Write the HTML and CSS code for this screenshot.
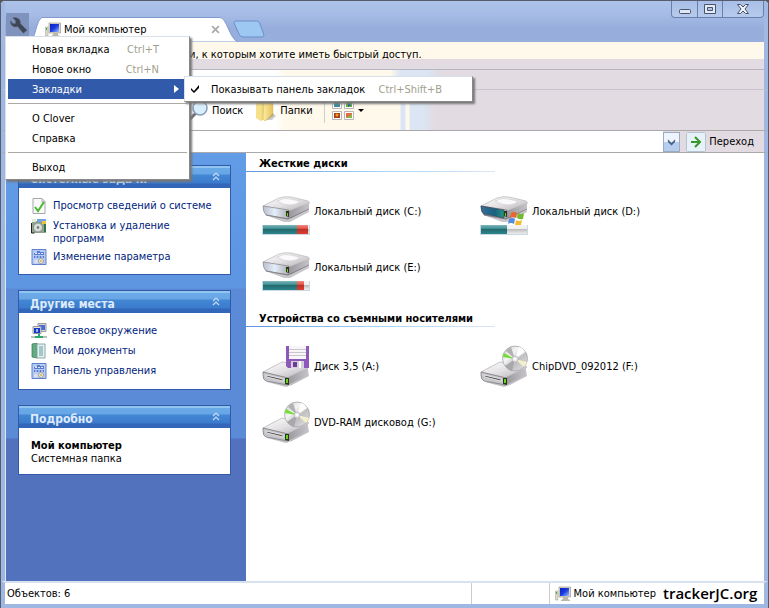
FILE: index.html
```html
<!DOCTYPE html>
<html lang="ru">
<head>
<meta charset="utf-8">
<title>Мой компьютер</title>
<link rel="stylesheet" href="styles.css">
</head>
<body>
<svg class="defs" aria-hidden="true">
  <defs>
    <linearGradient id="metal" x1="0" y1="0" x2="1" y2="1"><stop offset="0" stop-color="#fff"/><stop offset=".5" stop-color="#e3e1e3"/><stop offset="1" stop-color="#b0aeb2"/></linearGradient>
    <linearGradient id="side" x1="0" y1="0" x2="1" y2="0"><stop offset="0" stop-color="#98969a"/><stop offset="1" stop-color="#c5c3c7"/></linearGradient>
    <linearGradient id="face" x1="0" y1="0" x2="1" y2="0"><stop offset="0" stop-color="#b9bfcc"/><stop offset=".45" stop-color="#e4eefa"/><stop offset="1" stop-color="#aaa8ad"/></linearGradient>
    <linearGradient id="teal" x1="0" y1="0" x2="1" y2="0"><stop offset="0" stop-color="#3a6f9c"/><stop offset=".6" stop-color="#17607f"/><stop offset="1" stop-color="#2b9484"/></linearGradient>
    <linearGradient id="screen" x1="0" y1="0" x2="1" y2="1"><stop offset="0" stop-color="#0a1fc0"/><stop offset=".5" stop-color="#1c3be0"/><stop offset="1" stop-color="#9cc4ff"/></linearGradient>
    <linearGradient id="disc" x1="0" y1="0" x2="1" y2="1"><stop offset="0" stop-color="#c9c9cb"/><stop offset=".35" stop-color="#f4f4f4"/><stop offset=".6" stop-color="#c0bfc2"/><stop offset="1" stop-color="#e6e6e6"/></linearGradient>
    <linearGradient id="folder" x1="0" y1="0" x2="1" y2="0"><stop offset="0" stop-color="#fbeca6"/><stop offset="1" stop-color="#e6c258"/></linearGradient>
  </defs>
  <symbol id="hdd" viewBox="0 0 48 27">
    <path d="M6 20 22 26 28 26 47 16 46 11 28 22Z" fill="#c9c7cb"/>
    <path d="M1 10 17 2Q23 0 29 1L46 5Q48 6 47 8L27 15Z" fill="url(#metal)" stroke="#b6b4b8" stroke-width=".7"/>
    <path d="M27 15 47 7V13L30 22 26 23Z" fill="url(#side)"/>
    <path d="M1 10 27 14Q28 19 26 23L4 19Q1 16 1 10Z" fill="url(#face)" stroke="#88868b" stroke-width=".7"/>
    <path d="M15 5Q22 1 29 3T38 5Q35 9 28 9T15 5Z" fill="#fafafa" stroke="#d0ced2" stroke-width=".7"/>
    <path d="M4 19 26 23 47 13" stroke="#7a787d" stroke-width=".8" fill="none"/>
    <path d="M24 15h3v6l-3-1Z" fill="#28351b"/><path d="M25 17h1v3h-1Z" fill="#72cb24"/>
  </symbol>
  <symbol id="sysdisk" viewBox="0 0 48 30">
    <use href="#hdd" width="48" height="27"/>
    <path d="M1 10 24 14V22L4 18Q1 16 1 10Z" fill="url(#teal)" stroke="#394552" stroke-width=".7"/>
    <path d="m31 17q3-2 6 0l-1 5q-3-2-6 0Z" fill="#ed6331"/><path d="m38 17q3 2 6 0l-1 6q-3 1-6-1Z" fill="#76b82d"/>
    <path d="m29 23q3-2 6 0l-1 5q-3-2-6 0Z" fill="#528ce0"/><path d="m36 24q3 2 6 0l-1 5q-3 2-6 0Z" fill="#f4bc2c"/>
  </symbol>
  <symbol id="drivebase" viewBox="0 0 48 44">
    <path d="M5 38 24 43 30 41 47 32 46 26 26 38Z" fill="#c3c1c5"/>
    <path d="M1 28 20 18 46 22Q47 23 46 24L25 34Z" fill="url(#metal)" stroke="#b0aeb2" stroke-width=".7"/>
    <path d="M25 34 46 24V31L26 41Z" fill="url(#side)"/>
    <path d="M1 28 26 34V41L4 37Q1 36 1 31Z" fill="#c8c6ca" stroke="#7e7c81" stroke-width=".8"/>
    <path d="m4 31 17 4v2L5 33Z" fill="#4a494d" stroke="#f4f4f4" stroke-width=".8"/>
    <path d="M23 34h4v7l-4-1Z" fill="#27371c"/><path d="M24 35h2v4h-2Z" fill="#65d21f"/>
  </symbol>
  <symbol id="floppy" viewBox="0 0 48 44">
    <use href="#drivebase" width="48" height="44"/>
    <path d="M24 2h23v22H26l-2-2Z" fill="#8e58ba"/><path d="M27 2h17v13H27Z" fill="#f7f5f8"/>
    <path d="M27 5.500h17M27 8.500h17M27 11.500h17" stroke="#cbc7cf"/><path d="M29 17h13v7H29Z" fill="#d5cedb"/><path d="M31 18h4v5h-4Z" fill="#6d3c96"/><path d="M37 17h2v7h-2Z" fill="#fff"/>
  </symbol>
  <symbol id="optical" viewBox="0 0 48 44">
    <use href="#drivebase" width="48" height="44"/>
    <circle cx="35" cy="14.500" r="12.500" fill="url(#disc)" stroke="#a6a4a8" stroke-width=".8"/>
    <path d="M35 15 24 9q-1 2-1 4Z" fill="#75dd35"/><path d="M35 15 31 3q-3 1-5 4Z" fill="#b2b1b4"/><path d="m35 15 4-12q4 1 6 5Z" fill="#fff"/><path d="m35 15 12 3q-1 3-3 5Z" fill="#f4f0cc"/><path d="m35 15-3 12q-4-1-7-5Z" fill="#a9a7ab"/>
    <circle cx="35" cy="15" r="3" fill="#e9e8ea" stroke="#b8b8b8" stroke-width=".8"/><circle cx="35" cy="15" r="1.200" fill="#fff"/>
  </symbol>
  <symbol id="pc" viewBox="0 0 16 16">
    <path d="M.5 5h2.500v9H.5Z" fill="#dedccf" stroke="#aaa79b" stroke-width=".6"/><path d="M1 6h1v2H1Z" fill="#28b82c"/>
    <path d="M4 1h11.500v10H4Z" fill="#ddd8c8" stroke="#9f9b91" stroke-width=".7"/><path d="M5 2h9v8H5Z" fill="url(#screen)"/>
    <path d="M8 11h5v2l2 1v1H6v-1l2-1Z" fill="#bbb7aa"/>
  </symbol>
  <symbol id="check" viewBox="0 0 16 16"><path d="M2 .5h9l3 3v12H2Z" fill="#fafafa" stroke="#a7a7a7"/><path d="M11 1v3h3" fill="none" stroke="#aaa"/><path d="m4 9 3 4 6-9" fill="none" stroke="#48b82e" stroke-width="2"/></symbol>
  <symbol id="install" viewBox="0 0 16 16"><path d="M1 3h14v12H1Z" fill="#8fa590"/><path d="M1 1h4v3H1Z" fill="#e4ead9"/><path d="M6 1h9v3H6Z" fill="#71a3df"/><path d="M11 3h4v3h-4Z" fill="#e9c53d"/><path d="M.5 5v10h3" stroke="#222" fill="none"/><circle cx="7" cy="9.500" r="4.500" fill="#d9ddd9" stroke="#8a8d8a"/><circle cx="7" cy="9.500" r="1.200" fill="#67716b"/><path d="M13 6h2v8h-2Z" fill="#35714a"/></symbol>
  <symbol id="panel" viewBox="0 0 16 16"><path d="M1 .5h14v15H1Z" fill="#b4cbf4" stroke="#6180cc"/><path d="M3 4h3V2h3v1h4v3H3ZM3 7h10v2H3Z" fill="#5b7bd0"/><path d="M4 4.500h2m1 0h2m1 0h2M4 8h2m1 0h2m1 0h2" stroke="#dbe6ff"/><circle cx="5" cy="12.500" r="2" fill="#dce0eb"/><circle cx="10" cy="12" r="2.500" fill="#eee" stroke="#a4a29a"/><circle cx="10" cy="12" r="1" fill="#d8b33b"/></symbol>
  <symbol id="network" viewBox="0 0 16 16"><path d="M7 .5h8v8H7Z" fill="#dbd9c9" stroke="#9998a0"/><path d="M8 2h6v5H8Z" fill="#456bdc"/><path d="M2 3.500h8v7H2Z" fill="#e7e4d9" stroke="#9998a0"/><path d="M3 5h6v5H3Z" fill="#1838c5"/><path d="M5 6h2v3H5Z" fill="#98b7ff"/><path d="M8 11v3M4 14h8" stroke="#2caa68" stroke-width="2"/><path d="M0 13h4v2H0Zm12 0h4v2h-4Z" fill="#bac1bd"/></symbol>
  <symbol id="docs" viewBox="0 0 16 16"><path d="M1 1 6 0v15l-5-1Z" fill="#63ab80" stroke="#36755b" stroke-width=".7"/><path d="M6 1h8v14H6Z" fill="#e3eff0" stroke="#8caaa8"/><path d="M8 4h4M8 6h4M8 8h4M8 10h4M8 12h4" stroke="#609fa0"/></symbol>
  <symbol id="chev" viewBox="0 0 10 10"><path d="m2 4 3-3 3 3M2 8l3-3 3 3" stroke="#c4dcf8" fill="none" stroke-width="1.200"/></symbol>
</svg>

<div class="window">
  <header class="titlebar">
    <div class="app">
      <button class="wrench" aria-label="Меню"><svg viewBox="0 0 24 24"><path d="M11 4a5 5 0 0 0-4 0l3 3v3H7L5 7a5 5 0 0 0 7 6l6 7 4-3-7-7a5 5 0 0 0-4-6Z" fill="#3f4756" stroke="#5d6a80" stroke-width=".6"/></svg></button>
      <nav class="menu">
        <button class="row"><span>Новая вкладка</span><kbd>Ctrl+T</kbd></button>
        <button class="row"><span>Новое окно</span><kbd>Ctrl+N</kbd></button>
        <div class="sub">
          <button class="row active"><span>Закладки</span><svg class="arrow" viewBox="0 0 5 8"><path d="M0 0 5 4 0 8Z" fill="#fff"/></svg></button>
          <div class="submenu"><button class="row"><svg class="tick" viewBox="0 0 10 10"><path d="m1 4 3 3 5-6v3L4 9 1 6Z"/></svg><span>Показывать панель закладок</span><kbd>Ctrl+Shift+B</kbd></button></div>
        </div>
        <hr>
        <button class="row">О Clover</button>
        <button class="row">Справка</button>
        <hr>
        <button class="row">Выход</button>
      </nav>
    </div>
    <div class="tab">
      <svg class="tabshape" viewBox="0 0 208 25" preserveAspectRatio="none"><path d="M0 25C6 21 6 3 12 .5H190C197 1 199 21 208 25Z" fill="#fff" stroke="#7f9bcf"/></svg>
      <svg class="i16"><use href="#pc"/></svg><span>Мой компьютер</span>
      <button class="close" aria-label="Закрыть вкладку"><svg viewBox="0 0 8 8"><path d="m1 1 6 6m0-6L1 7" stroke="#aaa" stroke-width="1.500"/></svg></button>
    </div>
    <button class="newtab" aria-label="Новая вкладка"><svg viewBox="0 0 32 18"><path d="M3 1H24Q26 1 27 4L31 15Q31 17 29 17H10Q7 17 6 14L1 3Q1 1 3 1Z" fill="#9cc8f1" stroke="#6d8fc8"/></svg></button>
    <div class="controls">
      <button aria-label="Свернуть"><svg viewBox="0 0 14 12"><rect x="1.500" y="6.500" width="11" height="4" rx="1" fill="#dfe7f5" stroke="#46536b"/></svg></button>
      <button aria-label="Развернуть"><svg viewBox="0 0 14 12"><path d="M1.500 1.500h11v9h-11Zm3 3v3h5v-3Z" fill="#e4eaf5" fill-rule="evenodd" stroke="#46536b"/></svg></button>
      <button class="wide" aria-label="Закрыть"><svg viewBox="0 0 14 12"><path d="M1.500 1.500h3L7 4l2.500-2.500h3L9 6l3.500 4.500h-3L7 8l-2.500 2.500h-3L5 6Z" fill="#edf1f8" stroke="#46536b"/></svg></button>
    </div>
  </header>
  <div class="info"><span>ки, к которым хотите иметь быстрый доступ.</span></div>
  <div class="menubar"></div>
  <div class="toolbar">
    <button><svg class="i24" viewBox="0 0 24 24"><path d="m11 15-8 8" stroke="#74717a" stroke-width="3"/><circle cx="15" cy="10" r="7" fill="#d9effd" stroke="#8a9db9" stroke-width="1.500"/><path d="M10 9q2-5 7-4-5 1-7 4Z" fill="#fff"/></svg>Поиск</button>
    <button class="folders"><svg class="i24" viewBox="0 0 24 24"><path d="M5 2h8l1 2v16l-6 3-4-3V3Z" fill="url(#folder)"/><path d="m11 5 7-2 2 2v13l-8 5-2-2Z" fill="url(#folder)" stroke="#dbb855" stroke-width=".5"/><path d="M3 3l5 3v17l-5-3Z" fill="#f6e08a"/><path d="m20 15 3 3-4 4h-6Z" fill="#8886"/></svg>Папки</button>
    <button class="views" aria-label="Вид"><svg class="i24" viewBox="0 0 24 24"><g fill="#fff" stroke="#b9b5b7"><path d="M1.500 2.500h9v8h-9ZM13.500 2.500h9v8h-9ZM1.500 13.500h9v8h-9ZM13.500 13.500h9v8h-9Z"/></g><path d="M3 4h6v5H3Z" fill="#3d8c9a"/><path d="M15 4h6v5h-6Z" fill="#68ad36"/><path d="M3 15h6v5H3Z" fill="#a33f1e"/><path d="M15 15h6v5h-6Z" fill="#e26b42"/><path d="m17 5 3 2-3 2Z" fill="#275ec8"/><circle cx="6" cy="17" r="1.500" fill="#f0a01c"/><path d="m15 20 6-4v4Z" fill="#81b84a"/></svg><svg class="down" viewBox="0 0 6 3"><path d="M0 0h6L3 3Z"/></svg></button>
  </div>
  <form class="address">
    <input type="text" aria-label="Адрес">
    <button type="button" class="drop" aria-label="Список адресов"><svg viewBox="0 0 10 8"><path d="m1 1 4 4 4-4v3L5 8 1 4Z" fill="#4d6185"/></svg></button>
    <button type="button" class="go"><svg viewBox="0 0 20 20"><rect x=".5" y=".5" width="19" height="19" rx="1" fill="#e7f1fa" stroke="#b6c3d3"/><path d="M5 10h9M9 5l5 5-5 5" fill="none" stroke="#36982b" stroke-width="2"/></svg>Переход</button>
  </form>
  <div class="body">
    <aside>
      <section class="panel">
        <h2>Системные задачи<svg><use href="#chev"/></svg></h2>
        <div class="links tasks">
          <a href="#"><svg class="i16"><use href="#check"/></svg>Просмотр сведений о системе</a>
          <a href="#"><svg class="i16"><use href="#install"/></svg>Установка и удаление<br>программ</a>
          <a href="#"><svg class="i16"><use href="#panel"/></svg>Изменение параметра</a>
        </div>
      </section>
      <section class="panel">
        <h2>Другие места<svg><use href="#chev"/></svg></h2>
        <div class="links">
          <a href="#"><svg class="i16"><use href="#network"/></svg>Сетевое окружение</a>
          <a href="#"><svg class="i16"><use href="#docs"/></svg>Мои документы</a>
          <a href="#"><svg class="i16"><use href="#panel"/></svg>Панель управления</a>
        </div>
      </section>
      <section class="panel">
        <h2>Подробно<svg><use href="#chev"/></svg></h2>
        <div class="details"><b>Мой компьютер</b><span>Системная папка</span></div>
      </section>
    </aside>
    <main>
      <h3>Жесткие диски</h3>
      <div class="grid">
        <div class="item"><div class="disk"><svg class="hdd"><use href="#hdd"/></svg><i class="bar c"></i></div>Локальный диск (C:)</div>
        <div class="item"><div class="disk"><svg class="sys"><use href="#sysdisk"/></svg><i class="bar d"></i></div>Локальный диск (D:)</div>
        <div class="item"><div class="disk"><svg class="hdd"><use href="#hdd"/></svg><i class="bar e"></i></div>Локальный диск (E:)</div>
      </div>
      <h3>Устройства со съемными носителями</h3>
      <div class="grid">
        <div class="item"><svg class="drive"><use href="#floppy"/></svg>Диск 3,5 (A:)</div>
        <div class="item"><svg class="drive"><use href="#optical"/></svg>ChipDVD_092012 (F:)</div>
        <div class="item"><svg class="drive"><use href="#optical"/></svg>DVD-RAM дисковод (G:)</div>
      </div>
    </main>
  </div>
  <footer>
    <span class="count">Объектов: 6</span><span class="cell"></span>
    <span class="place"><svg class="i16"><use href="#pc"/></svg>Мой компьютер</span><strong>trackerJC.org</strong>
  </footer>
</div>
</body>
</html>
```
FILE: styles.css
```css
* { box-sizing: border-box; }
body { margin: 0; background: #555; font: 11px/13px "DejaVu Sans Condensed", Tahoma, "DejaVu Sans", sans-serif; color: #000; }
button { font: inherit; color: inherit; border: 0; padding: 0; background: none; white-space: nowrap; }
svg { display: block; flex: none; }
.defs { position: absolute; width: 0; height: 0; }
.i16 { width: 16px; height: 16px; }
.i24 { width: 24px; height: 24px; }

.window { min-height: 100vh; display: flex; flex-direction: column; border: 1px solid #555d6c; border-bottom: 0; border-radius: 5px 5px 0 0; background: #fff; }
.window > * { border-left: 4px solid #9fb7e3; border-right: 4px solid #9fb7e3; }

.titlebar { height: 41px; display: flex; align-items: flex-end; border-color: #a2b9e4; background: linear-gradient(#abc2e9, #a7bde7 30%, #97aedc 65%, #98afdd); border-radius: 4px 4px 0 0; }
.app { position: relative; width: 29px; height: 29px; padding-left: 1px; }
.wrench { width: 23px; height: 24px; background: #7f93bd; }
.wrench svg { width: 23px; height: 23px; }
.tab { position: relative; width: 208px; height: 25px; margin-left: -4px; padding: 0 18px 0 15px; display: flex; align-items: center; gap: 3px; }
.tab > * { position: relative; }
.tab .tabshape { position: absolute; inset: 0; width: 100%; height: 100%; }
.tab .close { margin-left: auto; }
.close svg { width: 9px; height: 9px; }
.newtab { margin: 0 0 4px -5px; }
.newtab svg { width: 32px; height: 18px; }
.controls { align-self: flex-start; margin-left: auto; display: flex; height: 17px; border: 1px solid #6980ac; border-top: 0; border-radius: 0 0 4px 4px; background: linear-gradient(#a9bfe7, #b7caec); }
.controls button { width: 25px; display: grid; place-items: center; }
.controls button + button { border-left: 1px solid #6980ac; }
.controls .wide { width: 41px; }
.controls svg { width: 14px; height: 12px; }

.menu, .submenu { position: absolute; z-index: 2; background: #fff; border: 1px solid #d8e0ea; border-right-color: #888; border-bottom-color: #888; box-shadow: 2px 2px 2px #777; }
.menu { top: 23px; left: 0; width: 185px; padding: 2px; }
.row { width: 100%; height: 20px; display: flex; align-items: center; padding: 0 28px 0 24px; text-align: left; }
.row kbd { margin-left: auto; font: inherit; color: #a09f8e; }
.row.active { background: #315aaa; color: #fff; padding-right: 8px; }
.arrow { width: 5px; height: 8px; margin-left: auto; }
.menu hr { height: 1px; margin: 4px 0; border: 0; background: #aaa9a6; }
.sub { position: relative; }
.submenu { top: -3px; left: 176px; width: 289px; padding: 2px; }
.submenu .row { padding: 0 28px 0 3px; }
.tick { width: 10px; height: 10px; margin-right: 11px; }

.info { height: 17px; padding-left: 178px; display: flex; align-items: flex-end; background: #fff9ec; }
.info span { padding-top: 6px; line-height: 13px; height: 17px; }
.menubar { height: 31px; background: linear-gradient(#e2dbe2 10px, #b6b6c2 10px, #b6b6c2 11px, transparent 11px), linear-gradient(90deg, #fff 270px, #fff9ec 280px, #fff9ec 385px, #dbe5f4 396px, #dbe5f4 422px, #e2dbe2 435px); border-bottom: 1px solid #c8c3cc; }
.toolbar { height: 41px; padding-left: 180px; display: flex; align-items: center; background: linear-gradient(90deg, #fff 270px, #fff9ec 280px, #fff9ec 395px, #dbe5f4 396px, #dbe5f4 400px, #fff9ec 401px, #fff9ec 404px, #dbe5f4 405px, #dbe5f4 418px, #e2dbe2 430px); border-bottom: 1px solid #aaa7a8; }
.toolbar button { height: 26px; display: flex; align-items: center; gap: 3px; }
.toolbar .folders { margin-left: 10px; }
.toolbar .views { margin-left: 11px; padding-left: 6px; border-left: 1px solid #cfccd0; }
.down { width: 6px; height: 3px; }
.address { height: 22px; display: flex; align-items: center; background: #e2dbe2; border-bottom: 1px solid #aaa; }
.address input { flex: 1; min-width: 0; height: 21px; padding: 0 4px; border: 0; background: #fff; font: inherit; }
.drop { width: 17px; height: 20px; display: grid; place-items: center; border: 1px solid #9cabc1; background: linear-gradient(#edf4fd 50%, #b5cdee 50%); }
.drop svg { width: 9px; height: 8px; }
.go { margin-left: 6px; padding-right: 10px; display: flex; align-items: center; gap: 3px; }
.go svg { width: 20px; height: 20px; }

.body { flex: 1; display: flex; align-items: stretch; }
aside { width: 241px; padding: 12px 15px 12px 12px; border-left: 1px solid #dce6f5; background: linear-gradient(#629be6, #5d95e0 135px, #5b8ad6 136px, #5b8ad6 285px, #5272be 286px); display: flex; flex-direction: column; gap: 15px; }
.panel { border: 1px solid #315aaa; background: #fff; }
.panel h2 { height: 22px; margin: 0; padding: 3px 9px 0 11px; display: flex; align-items: center; justify-content: space-between; font: bold 12px/14px "DejaVu Sans Condensed", sans-serif; color: #dfeafa; background: linear-gradient(#91c4ef 2px, #6baae9 2px, #68a6e6 8px, #4387d4 9px, #3b7bcd 17px, #3166b9 18px); }
.panel h2 svg { width: 10px; height: 10px; margin-bottom: 3px; }
.links { padding: 10px 12px; display: flex; flex-direction: column; gap: 4px; }
.links a { display: flex; gap: 6px; color: #00247d; text-decoration: none; white-space: nowrap; line-height: 13px; min-height: 16px; padding-top: 1px; }
.links a svg { margin-top: -1px; }
.links a:not(:last-child) { min-height: 16px; }
.tasks { padding-bottom: 9px; }
.details { padding: 11px 12px 9px; display: flex; flex-direction: column; }
main { flex: 1; min-width: 0; }
h3 { margin: 0; padding: 4px 0 1px 13px; height: 19px; width: 249px; font: bold 11px/13px "DejaVu Sans Condensed", sans-serif; white-space: nowrap; border-bottom: 1px solid; border-image: linear-gradient(90deg, #5c94dd, #a8d6f8 55%, #dce6f5) 1; }
.grid { padding: 11px 16px 13px; display: grid; grid-template-columns: 218px 218px; }
.item { height: 56px; display: flex; align-items: center; gap: 4px; white-space: nowrap; }
.disk { height: 48px; width: 48px; display: flex; flex-direction: column; justify-content: flex-end; }
.hdd { width: 48px; height: 27px; margin-bottom: 2px; }
.sys { width: 48px; height: 30px; margin-bottom: -1px; }
.drive { width: 48px; height: 44px; }
.bar { height: 10px; flex: none; border: 1px solid #c9d8e2; border-top: 0; }
.c { background: linear-gradient(#fff6, #0000 50%, #0003 50%, #0000), linear-gradient(90deg, #2c858b 74%, #e53e32 74%, #e53e32 98%, #eee 98%); }
.d { background: linear-gradient(#fff6, #0000 50%, #0003 50%, #0000), linear-gradient(90deg, #2c858b 57%, #eee 57%); }
.e { background: linear-gradient(#fff6, #0000 50%, #0003 50%, #0000), linear-gradient(90deg, #2c858b 74%, #e53e32 74%, #e53e32 90%, #eee 90%); }

footer { height: 27px; display: flex; align-items: stretch; border-top: 2px solid #d7e1f0; border-bottom: 4px solid #9fb7e3; line-height: 22px; }
.count { flex: 1; padding-left: 2px; }
.cell { width: 79px; border: solid #ccc; border-width: 0 1px; }
.place { display: flex; align-items: center; gap: 3px; padding: 0 7px 0 5px; white-space: nowrap; }
footer strong { font: 600 15px/20px "Open Sans", sans-serif; width: 101px; white-space: nowrap; }
```
